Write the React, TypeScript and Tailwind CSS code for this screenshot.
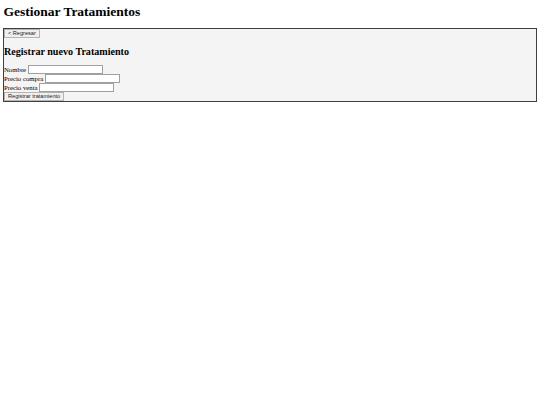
import React from "react";

const serif = "font-['Liberation_Serif','Times_New_Roman',serif]";
const sans = "font-['Liberation_Sans',Arial,sans-serif]";

const buttonClass = `${sans} flex h-[9px] items-center border border-[#b4b4b4] bg-[#efefef] px-[3px] text-[5.6px] leading-[7px] text-[#222]`;

function Field({ label }: { label: string }) {
  return (
    <div className="flex h-[9px] items-center">
      <label className="text-[6.75px] leading-[9px] text-black">{label}</label>
      <input
        type="text"
        className="ml-[1.5px] h-[9px] w-[75px] border border-[#a0a0a0] bg-white"
      />
    </div>
  );
}

export default function App() {
  return (
    <div className={`${serif} min-h-[405px] w-[540px] bg-white px-[3px] pt-[4px] text-black`}>
      <h1 className="pl-[0.5px] text-[13.5px] font-bold leading-[15.5px]">
        Gestionar Tratamientos
      </h1>
      <div className="mt-[8.5px] border border-[#3f3f3f] bg-[#f4f4f4]">
        <div className="flex">
          <button className={buttonClass}>&lt; Regresar</button>
        </div>
        <h2 className="mt-[7.5px] text-[10.1px] font-bold leading-[11.6px]">
          Registrar nuevo Tratamiento
        </h2>
        <form className="mt-[8.4px] flex flex-col">
          <Field label="Nombre" />
          <Field label="Precio compra" />
          <Field label="Precio venta" />
          <div className="flex">
            <button type="button" className={buttonClass}>
              Registrar tratamiento
            </button>
          </div>
        </form>
      </div>
    </div>
  );
}
